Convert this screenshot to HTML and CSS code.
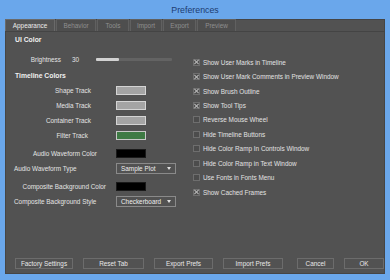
FILE: index.html
```html
<!DOCTYPE html>
<html>
<head>
<meta charset="utf-8">
<link rel="stylesheet" href="styles.css">
</head>
<body>
<div class="window">
  <div class="titlebar">Preferences</div>
  <div class="client">
    <div class="tabs">
      <div class="tab active w-app">Appearance</div>
      <div class="tab w-beh">Behavior</div>
      <div class="tab w-tools">Tools</div>
      <div class="tab w-imp">Import</div>
      <div class="tab w-exp">Export</div>
      <div class="tab w-prev">Preview</div>
    </div>
    <div class="panel">
      <div class="left">
        <div class="row heading first">UI Color</div>
        <div class="row bright-row">
          <div class="lbl-bright">Brightness</div>
          <div class="value">30</div>
          <div class="slider"><div class="slider-fill" style="width:23px"></div></div>
        </div>
        <div class="row heading tl">Timeline Colors</div>
        <div class="row"><div class="lbl p25">Shape Track</div><div class="swatch grey"></div></div>
        <div class="row"><div class="lbl p25">Media Track</div><div class="swatch grey"></div></div>
        <div class="row"><div class="lbl p25">Container Track</div><div class="swatch grey"></div></div>
        <div class="row"><div class="lbl p28">Filter Track</div><div class="swatch green"></div></div>
        <div class="row gap6"><div class="lbl p19">Audio Waveform Color</div><div class="swatch black"></div></div>
        <div class="row"><div class="lbl-left">Audio Waveform Type</div><div class="select"><span class="sel-text">Sample Plot</span><span class="sel-arrow"></span></div></div>
        <div class="row gap6"><div class="lbl p10">Composite Background Color</div><div class="swatch black"></div></div>
        <div class="row"><div class="lbl-left">Composite Background Style</div><div class="select"><span class="sel-text">Checkerboard</span><span class="sel-arrow"></span></div></div>
      </div>
      <div class="right">
        <div class="check"><span class="box on"></span>Show User Marks in Timeline</div>
        <div class="check"><span class="box on"></span>Show User Mark Comments in Preview Window</div>
        <div class="check"><span class="box on"></span>Show Brush Outline</div>
        <div class="check"><span class="box on"></span>Show Tool Tips</div>
        <div class="check"><span class="box"></span>Reverse Mouse Wheel</div>
        <div class="check"><span class="box"></span>Hide Timeline Buttons</div>
        <div class="check"><span class="box"></span>Hide Color Ramp In Controls Window</div>
        <div class="check"><span class="box"></span>Hide Color Ramp in Text Window</div>
        <div class="check"><span class="box"></span>Use Fonts in Fonts Menu</div>
        <div class="check"><span class="box on"></span>Show Cached Frames</div>
      </div>
    </div>
    <div class="buttons">
      <div class="btn w58">Factory Settings</div>
      <div class="btn w61">Reset Tab</div>
      <div class="btn w59">Export Prefs</div>
      <div class="btn w60">Import Prefs</div>
      <div class="btn w37 push">Cancel</div>
      <div class="btn w40">OK</div>
    </div>
  </div>
</div>
</body>
</html>
```

FILE: styles.css
```css
html, body {
  margin: 0;
  padding: 0;
  background: #6aa7eb;
}
.window {
  width: 390px;
  height: 280px;
  box-sizing: border-box;
  background: #6aa7eb;
  padding: 0 5px 6px 5px;
  display: flex;
  flex-direction: column;
  font-family: "Liberation Sans", Arial, sans-serif;
  font-size: 6.4px;
  color: #e4e4e4;
}
.titlebar {
  height: 19px;
  line-height: 20px;
  text-align: center;
  font-size: 8.8px;
  color: #1d3c70;
}
.client {
  flex: 1;
  background: #525252;
  display: flex;
  flex-direction: column;
  box-shadow: inset 0 0 0 1px #454545;
}
.tabs {
  height: 13px;
  display: flex;
  gap: 1px;
  border-bottom: 1px solid #444;
  box-sizing: border-box;
}
.tab {
  height: 12px;
  line-height: 12px;
  text-align: center;
  color: #8e8e8e;
  border: 1px solid #606060;
  border-bottom: none;
  box-sizing: border-box;
  background: #4e4e4e;
}
.tab.active {
  color: #ececec;
  background: #545454;
  border-color: #6a6a6a;
}
.w-app { width: 50px; }
.w-beh { width: 40px; }
.w-tools { width: 32px; }
.w-imp { width: 32px; }
.w-exp { width: 33px; }
.w-prev { width: 39px; }

.panel {
  display: flex;
  height: 219px;
}
.left {
  width: 185px;
  display: flex;
  flex-direction: column;
  gap: 3px;
}
.row {
  height: 12px;
  display: flex;
  align-items: center;
}
.heading {
  font-weight: bold;
  padding-left: 10px;
  font-size: 6.8px;
  color: #f0f0f0;
}
.first { margin-top: 1px; }
.bright-row { margin-top: 5px; }
.tl { margin-top: 1px; }
.gap6 { margin-top: 3px; }
.lbl-bright {
  width: 56px;
  text-align: right;
}
.value {
  margin-left: 11px;
  width: 14px;
}
.slider {
  margin-left: 10px;
  width: 76px;
  height: 3px;
  background: #636363;
  border-radius: 1px;
}
.slider-fill {
  height: 3px;
  background: #d2d2d2;
  border-radius: 1px;
}
.lbl {
  width: 111px;
  box-sizing: border-box;
  text-align: right;
}
.p25 { padding-right: 25px; }
.p28 { padding-right: 28px; }
.p19 { padding-right: 19px; }
.p10 { padding-right: 10px; }
.lbl-left {
  width: 111px;
  box-sizing: border-box;
  padding-left: 9px;
}
.swatch {
  width: 30px;
  height: 9px;
  box-sizing: border-box;
}
.grey { background: #a4a4a4; border: 1px solid #d4d4d4; }
.green { background: #3e7a44; border: 1px solid #c8c8c8; }
.black { background: #000; border: 1px solid #1a1a1a; }
.select {
  width: 60px;
  height: 11px;
  box-sizing: border-box;
  border: 1px solid #8a8a8a;
  display: flex;
  align-items: center;
}
.sel-text {
  flex: 1;
  padding-left: 4px;
  color: #eeeeee;
}
.sel-arrow {
  width: 11px;
  height: 9px;
  position: relative;
}
.sel-arrow::after {
  content: "";
  position: absolute;
  left: 3px;
  top: 3px;
  border-left: 2.5px solid transparent;
  border-right: 2.5px solid transparent;
  border-top: 3px solid #e0e0e0;
}
.right {
  flex: 1;
  padding-top: 23px;
  padding-left: 3px;
  display: flex;
  flex-direction: column;
}
.check {
  height: 14.45px;
  display: flex;
  align-items: center;
  color: #e2e2e2;
}
.box {
  width: 7px;
  height: 7px;
  box-sizing: border-box;
  border: 1px solid #6e6e6e;
  background: #4c4c4c;
  margin-right: 3px;
  position: relative;
}
.box.on::before,
.box.on::after {
  content: "";
  position: absolute;
  left: 2px;
  top: -0.5px;
  width: 1px;
  height: 6px;
  background: #b8b8b8;
}
.box.on::before { transform: rotate(45deg); }
.box.on::after { transform: rotate(-45deg); }

.buttons {
  display: flex;
  gap: 10px;
  padding-left: 10px;
  margin-top: 7px;
}
.btn {
  height: 11px;
  line-height: 10px;
  box-sizing: border-box;
  border: 1px solid #6c6c6c;
  text-align: center;
  color: #e8e8e8;
}
.w58 { width: 58px; }
.w61 { width: 61px; }
.w59 { width: 59px; }
.w60 { width: 60px; }
.w37 { width: 37px; }
.w40 { width: 40px; }
.push { margin-left: 4px; }
```
